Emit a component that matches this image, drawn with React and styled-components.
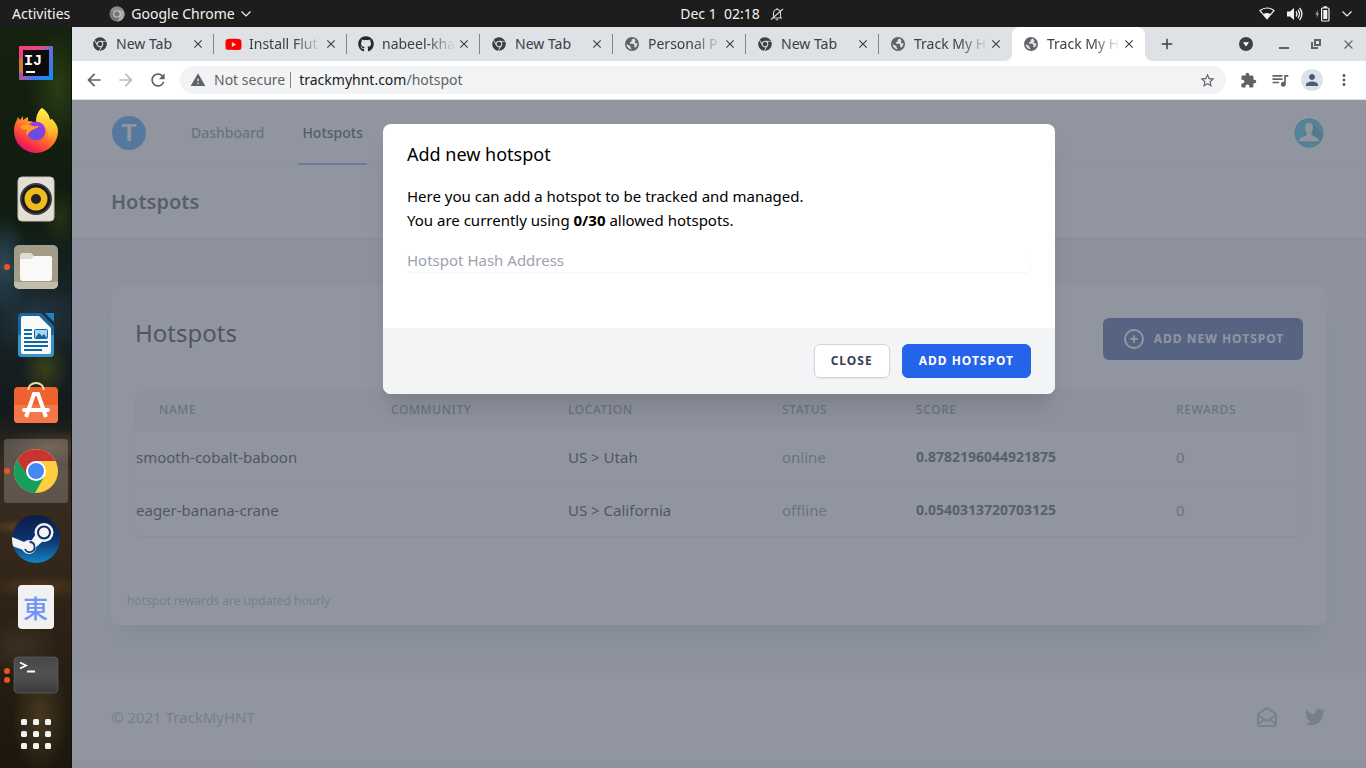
import React from "react";
import styled, { createGlobalStyle, css } from "styled-components";
import {
  MdArrowBack, MdArrowForward, MdRefresh, MdWarning, MdStarBorder, MdExtension,
  MdQueueMusic, MdPerson, MdMoreVert, MdClose, MdAdd,
} from "react-icons/md";
import { FaGithub, FaYoutube, FaTwitter, FaChrome } from "react-icons/fa";
import { HiOutlineMailOpen, HiOutlinePlusCircle } from "react-icons/hi";

const GlobalStyle = createGlobalStyle`
  *, *::before, *::after { box-sizing: border-box; }
  body {
    margin: 0;
    font-family: "Noto Sans", "Open Sans", "Noto Sans CJK JP", sans-serif;
    font-size: 15px;
    line-height: 24px;
    color: #000;
  }
  h1, h2, p { margin: 0; font-size: inherit; font-weight: 400; }
  a { color: inherit; text-decoration: none; }
  svg { display: block; flex: none; }
  button, input { font: inherit; color: inherit; margin: 0; padding: 0; border: 0; background: none; }
  button { display: flex; align-items: center; justify-content: center; }
`;

/* ---------- desktop shell ---------- */

const Desktop = styled.div`
  min-height: 100vh;
  display: flex;
  flex-direction: column;
`;

const TopBar = styled.header`
  display: grid;
  grid-template-columns: 1fr auto 1fr;
  align-items: center;
  height: 27px;
  padding: 0 14px 0 12px;
  background: #1d1d1d;
  color: #f2f2f2;
  font-size: 14px;
`;

const BarGroup = styled.div`
  display: flex;
  align-items: center;
  gap: ${(p) => p.$gap}px;
  justify-content: ${(p) => p.$align || "flex-start"};
`;

const Clock = styled(BarGroup)`
  margin-left: 100px;
`;

const BarButton = styled.button`
  gap: 6px;
  line-height: 27px;
`;

const Workspace = styled.div`
  flex: 1;
  display: flex;
`;

const Dock = styled.nav`
  width: 72px;
  flex: none;
  padding-top: 2px;
  display: flex;
  flex-direction: column;
  align-items: center;
  border-right: 1px solid #111;
  background:
    radial-gradient(30px 60px at 58px 60px, rgba(52, 72, 22, 0.7), transparent),
    radial-gradient(24px 30px at 45px 342px, rgba(84, 92, 18, 0.55), transparent),
    radial-gradient(26px 50px at 4px 238px, rgba(52, 82, 104, 0.8), transparent),
    radial-gradient(50px 40px at 36px 292px, rgba(40, 62, 76, 0.7), transparent),
    radial-gradient(20px 30px at 60px 190px, rgba(56, 70, 22, 0.5), transparent),
    radial-gradient(50px 18px at 50px 420px, rgba(110, 84, 58, 0.6), transparent),
    radial-gradient(40px 8px at 20px 500px, rgba(110, 78, 44, 0.6), transparent),
    radial-gradient(50px 12px at 40px 560px, rgba(108, 72, 36, 0.55), transparent),
    radial-gradient(40px 30px at 20px 620px, rgba(66, 54, 36, 0.7), transparent),
    radial-gradient(28px 60px at 40px 690px, rgba(92, 76, 44, 0.6), transparent),
    linear-gradient(#14220e, #101c10 25%, #18242a 38%, #141a1a 52%, #3a2c20 60%, #33261a 72%, #2a2014 84%, #1c160c);
`;

const DockItem = styled.button`
  position: relative;
  width: 64px;
  height: 64px;
  margin: 2px 0;
  border-radius: 3px;
  ${(p) => p.$active && css`background: rgba(255, 255, 255, 0.2);`}
`;

const RunningDots = styled.span`
  position: absolute;
  left: 0;
  top: 0;
  height: 100%;
  display: flex;
  flex-direction: column;
  justify-content: center;
  gap: 3px;

  i {
    width: 6px;
    height: 6px;
    border-radius: 50%;
    background: #e95420;
  }
`;

/* ---------- browser chrome ---------- */

const Browser = styled.div`
  flex: 1;
  min-width: 0;
  display: flex;
  flex-direction: column;
`;

const TabStrip = styled.div`
  display: flex;
  align-items: center;
  height: 34px;
  padding: 0 2px 0 9px;
  background: #dee1e6;
  color: #3c4043;
`;

const Tab = styled.div`
  position: relative;
  width: 133px;
  height: 34px;
  display: flex;
  align-items: center;
  padding: 0 9px 0 11px;
  font-size: 14px;

  &::after {
    content: "";
    position: absolute;
    right: 0;
    top: 7px;
    width: 1px;
    height: 20px;
    background: ${(p) => (p.$active || p.$last ? "transparent" : "#80868b")};
  }

  ${(p) => p.$active && css`
    background: #fff;
    border-radius: 8px 8px 0 0;

    &::before {
      content: "";
      position: absolute;
      bottom: 0;
      left: -8px;
      right: -8px;
      height: 8px;
      background:
        radial-gradient(circle at 0 0, transparent 8px, #fff 8px) left / 8px 8px no-repeat,
        radial-gradient(circle at 100% 0, transparent 8px, #fff 8px) right / 8px 8px no-repeat;
    }
  `}
`;

const TabIcon = styled.span`
  width: 16px;
  margin-right: 8px;
  display: grid;
  place-items: center;
`;

const TabTitle = styled.span`
  flex: 1;
  min-width: 0;
  white-space: nowrap;
  ${(p) => !p.$short && css`mask-image: linear-gradient(to right, #000 60%, transparent 98%);`}
`;

const NewTabButton = styled.button`
  width: 32px;
  height: 32px;
  margin-left: 6px;
`;

const WindowControls = styled.div`
  margin-left: auto;
  display: flex;

  button { width: 32px; height: 32px; }
  button:first-child { width: 44px; }
`;

const Toolbar = styled.div`
  display: flex;
  align-items: center;
  height: 39px;
  padding: 0 6px;
  background: #fff;
  border-bottom: 1px solid #dadce0;
  color: #5f6368;
`;

const ToolButton = styled.button`
  width: 32px;
  height: 32px;
  color: ${(p) => (p.$faded ? "#babcbe" : "#5f6368")};
`;

const Avatar = styled.span`
  width: 22px;
  height: 22px;
  display: grid;
  place-items: center;
  border-radius: 50%;
  background: #dee1e6;
  color: #4b5b78;
`;

const Omnibox = styled.div`
  flex: 1;
  height: 28px;
  margin: 0 6px;
  padding: 0 10px;
  display: flex;
  align-items: center;
  gap: 8px;
  border-radius: 14px;
  background: #f1f3f4;
  font-size: 14px;
`;

const Security = styled.span`
  padding-right: 5px;
  border-right: 1px solid #80868b;
  line-height: 16px;
`;

const Url = styled.span`
  flex: 1;
  b { font-weight: 400; color: #202124; }
`;

/* ---------- web page ---------- */

const Page = styled.div`
  position: relative;
  flex: 1;
  background: #f3f4f6;
`;

const Container = styled.div`
  max-width: 1280px;
  margin: 0 auto;
  padding: 0 32px;
`;

const NavBar = styled.div`
  background: #fff;
  box-shadow: inset 0 -1px #f3f4f6;
`;

const NavRow = styled(Container)`
  display: flex;
  height: 65px;
`;

const Brand = styled.a`
  align-self: center;
  display: grid;
  place-items: center;
  width: 36px;
  height: 34px;
  margin-right: 40px;
`;

const NavLink = styled.a`
  display: flex;
  align-items: center;
  margin-right: 30px;
  padding: 2px 4px 0;
  border-bottom: 2px solid ${(p) => (p.$active ? "#818cf8" : "transparent")};
  color: ${(p) => (p.$active ? "#111827" : "#6b7280")};
  font-size: 14px;
  font-weight: 500;
`;

const UserButton = styled.button`
  margin-left: auto;
  margin-right: 3px;
`;

const PageHeader = styled.header`
  background: #fff;
  box-shadow: 0 1px 3px rgba(0, 0, 0, 0.1), 0 1px 2px rgba(0, 0, 0, 0.06);

  h1 {
    padding: 24px 0;
    color: #1f2937;
    font-size: 20px;
    font-weight: 600;
    line-height: 25px;
  }
`;

const Main = styled(Container)`
  padding-top: 48px;
  padding-bottom: 48px;
`;

const Card = styled.section`
  padding: 32px 24px 12px;
  background: #fff;
  border-radius: 8px;
  box-shadow: 0 20px 25px -5px rgba(0, 0, 0, 0.1), 0 10px 10px -5px rgba(0, 0, 0, 0.04);
`;

const CardHead = styled.div`
  display: flex;
  justify-content: space-between;
  height: 42px;
  margin-bottom: 30px;

  h2 { font-size: 24px; line-height: 30px; }
`;

const capsText = css`
  font-size: 12px;
  font-weight: 700;
  letter-spacing: 1px;
  text-transform: uppercase;
  white-space: nowrap;
`;

const AddNewButton = styled.button`
  ${capsText}
  width: 200px;
  gap: 8px;
  border-radius: 6px;
  background: #1e3a8a;
  color: #fff;
`;

const TableFrame = styled.div`
  overflow: hidden;
  border-radius: 8px;
  box-shadow: 0 1px 3px rgba(0, 0, 0, 0.1), 0 1px 2px rgba(0, 0, 0, 0.06);
`;

const Table = styled.table`
  width: 100%;
  table-layout: fixed;
  border-collapse: collapse;
  text-align: left;

  th {
    height: 40px;
    padding: 0 24px;
    background: #f3f4f6;
    color: #6b7280;
    font-size: 12px;
    font-weight: 500;
    letter-spacing: 0.05em;
    text-transform: uppercase;
  }
  td {
    height: 53px;
    padding: 0 24px;
    border-top: 1px solid #e9ebee;
    white-space: nowrap;
  }
  td:first-child { padding: 0 1px; }
`;

const Muted = styled.td`
  color: #6b7280;
`;

const Score = styled.td`
  color: #1f2937;
  font-size: 14px;
  font-weight: 700;
`;

const Footnote = styled.p`
  margin: 53px -8px 0;
  color: #9ca3af;
  font-size: 12px;
`;

const Footer = styled.footer`
  background: #fff;
  color: #9ca3af;
`;

const FooterRow = styled(Container)`
  display: flex;
  align-items: center;
  gap: 24px;
  height: 88px;

  p { flex: 1; }
`;

const FooterLink = styled.a`
  display: grid;
  place-items: center;
  width: 24px;
  height: 24px;
`;

/* ---------- modal ---------- */

const Overlay = styled.div`
  position: absolute;
  inset: 0;
  padding-top: 24px;
  background: rgba(107, 114, 128, 0.75);
`;

const Modal = styled.div`
  max-width: 672px;
  margin: 0 auto;
  overflow: hidden;
  border-radius: 8px;
  background: #fff;
  box-shadow: 0 20px 25px -5px rgba(0, 0, 0, 0.1), 0 10px 10px -5px rgba(0, 0, 0, 0.04);
`;

const ModalBody = styled.div`
  padding: 16px 24px 56px;

  h2 { font-size: 18px; line-height: 28px; }
  p { margin: 16px 0; }
`;

const AddressInput = styled.input`
  display: block;
  width: 100%;
  height: 24px;
  border-radius: 6px;
  box-shadow: 0 1px 2px rgba(0, 0, 0, 0.05);

  &::placeholder { color: #9ca3af; opacity: 1; }
`;

const ModalFoot = styled.div`
  display: flex;
  justify-content: flex-end;
  gap: 12px;
  padding: 16px 24px;
  background: #f3f4f6;
`;

const ModalButton = styled.button`
  ${capsText}
  height: 34px;
  padding: 0 16px;
  border: 1px solid ${(p) => (p.$primary ? "#2563eb" : "#d1d5db")};
  border-radius: 6px;
  background: ${(p) => (p.$primary ? "#2563eb" : "#fff")};
  color: ${(p) => (p.$primary ? "#fff" : "#374151")};
  ${(p) => !p.$primary && css`box-shadow: 0 1px 2px rgba(0, 0, 0, 0.05);`}
`;

/* ---------- drawings ---------- */

const Chevron = () => (
  <svg width="10" height="6" viewBox="0 0 10 6" fill="none" stroke="currentColor" strokeWidth="1.2"><path d="M.5.5 5 5 9.5.5" /></svg>
);

const ChromeGray = () => (
  <svg width="16" height="16" viewBox="0 0 16 16">
    <circle cx="8" cy="8" r="7.5" fill="#777" />
    <path d="M8 4.2h6.5A7.5 7.5 0 0 1 8 15.5l3.3-5.6z" fill="#a9a9a9" />
    <path d="M1.5 4.3A7.5 7.5 0 0 1 14.5 4.2H8a3.8 3.8 0 0 0-3.6 2.6z" fill="#8d8d8d" />
    <circle cx="8" cy="8" r="3.6" fill="#ddd" /><circle cx="8" cy="8" r="2.7" fill="#777" />
  </svg>
);

const BellOff = () => (
  <svg width="14" height="14" viewBox="0 0 14 14" fill="none" stroke="#d5d5d5" strokeWidth="1.1">
    <path d="M2 11h10M3.5 11V6a3.5 3.5 0 0 1 7 0v5M5.8 12.8h2.4M7 1v1.5M1 12.5 13 2" />
  </svg>
);

const Wifi = () => (
  <svg width="16" height="13" viewBox="0 0 16 13">
    <path d="M1 3.6Q8-1.6 15 3.6L8 11.8Z" fill="none" stroke="#f2f2f2" strokeWidth="1.2" />
    <path d="M4.2 7.3Q8 4.8 11.8 7.3L8 12Z" fill="#f2f2f2" />
  </svg>
);

const Volume = () => (
  <svg width="16" height="14" viewBox="0 0 16 14" fill="none" stroke="#f2f2f2" strokeWidth="1.3">
    <path d="M0 4.5h3L7 1v12L3 9.5H0z" fill="#f2f2f2" stroke="none" />
    <path d="M9 4.5q1.8 2.5 0 5M11 2.8q3 4.2 0 8.4M12.6 1q4.6 6 0 12" />
  </svg>
);

const Battery = () => (
  <svg width="15" height="16" viewBox="0 0 15 16">
    <path d="M3 4 .3 8.5H2L1.4 12 4 7.5H2.6z" fill="#aaa" />
    <rect x="6.6" y="2" width="7.4" height="13" rx="1" fill="none" stroke="#f2f2f2" strokeWidth="1.2" />
    <path d="M8.5.2h3.6V2H8.5zM8.3 4h4v9h-4z" fill="#f2f2f2" />
  </svg>
);

const Globe = () => (
  <svg width="14" height="14" viewBox="0 0 14 14">
    <circle cx="7" cy="7" r="7" fill="#5f6368" />
    <path d="M8.200 1.600 6.600 3v1.600L4.800 5.400l.4 1.400h3.200l1.200 1.500-.6 1.600 1.800.6A5.400 5.400 0 0 0 12.400 6L11 6.500 9.800 5.600 10.600 3.800 9.400 2zM1.600 7.200 4 8.200l1.600 1.200v1.400l1.200 1.600A5.400 5.400 0 0 1 1.600 7.200z" fill="#dee1e6" />
  </svg>
);

const Idea = () => (
  <svg width="36" height="36" viewBox="0 0 36 36">
    <defs><linearGradient id="ij" x1="0" y1="0" x2="1" y2="1"><stop offset="0" stopColor="#fc3a72" /><stop offset=".35" stopColor="#e04a8c" /><stop offset=".5" stopColor="#6b6cd6" /><stop offset="1" stopColor="#0a8cfa" /></linearGradient></defs>
    <path d="M1 1h34v34H1z" fill="url(#ij)" />
    <path d="M1 14h4l2 12-6 9z" fill="#c87838" /><path d="M1 26l10 9H1z" fill="#a658a8" />
    <path d="M5 5h26v26H5z" fill="#0b0b0c" />
    <text x="6" y="20" fill="#fff" fontFamily="Liberation Mono" fontWeight="700" fontSize="15">IJ</text>
    <path d="M8 26h9v2H8z" fill="#fff" />
  </svg>
);

const Firefox = () => (
  <svg width="46" height="48" viewBox="0 0 46 48">
    <defs>
      <linearGradient id="fx" x1=".85" y1="0" x2=".25" y2="1"><stop offset="0" stopColor="#fff04a" /><stop offset=".3" stopColor="#ffbd28" /><stop offset=".6" stopColor="#ff6a28" /><stop offset=".85" stopColor="#f5264e" /><stop offset="1" stopColor="#d80f80" /></linearGradient>
      <radialGradient id="fp" cx=".5" cy=".7" r=".7"><stop offset="0" stopColor="#5b50e0" /><stop offset="1" stopColor="#a03ae8" /></radialGradient>
      <linearGradient id="fy" x1=".5" y1="0" x2=".5" y2="1"><stop offset="0" stopColor="#fff04a" /><stop offset="1" stopColor="#ffb02a" stopOpacity=".5" /></linearGradient>
    </defs>
    <path d="M29 1c4 3 7 6 8 12l2-1c4 4 6 8 6 12A22 22 0 0 1 1 24c0-6 2-9 2-9l2-5 2 3 3-4v4l5-3v4c4 0 6 1 8 3 0-6 1-12 6-16z" fill="url(#fx)" />
    <path d="M29 1c4 3 7 6 8 12l2-1c5 8 3 17-3 20 0-9-3-13-7-14-4-2-6-4-6-1 0-6 1-12 6-16z" fill="url(#fy)" />
    <circle cx="23" cy="24" r="9.500" fill="url(#fp)" />
    <path d="M7 20c3-3 8-3 13-1 3 1 5-1 6 0-2 3-6 3-8 5-2 1-3 3-4 5-1-3-1-4 0-6-3 0-5-1-7-3z" fill="#ff9a22" />
  </svg>
);

const Rhythmbox = () => (
  <svg width="38" height="46" viewBox="0 0 38 46">
    <rect x="1" y="1" width="36" height="44" rx="4" fill="#e4dfd4" stroke="#c9c3b6" />
    <circle cx="19" cy="23" r="16" fill="#3a3a42" /><circle cx="19" cy="23" r="14" fill="#17171c" />
    <circle cx="19" cy="23" r="11.500" fill="#f0bb1c" /><circle cx="19" cy="23" r="5" fill="#222" />
  </svg>
);

const Files = () => (
  <svg width="46" height="46" viewBox="0 0 46 46">
    <rect x="1" y="1" width="44" height="44" rx="5" fill="#a39c89" /><path d="M1 40a5 5 0 0 0 5 5h34a5 5 0 0 0 5-5v-2H1z" fill="#c2bcad" />
    <path d="M7 14v-3a2 2 0 0 1 2-2h9l4 4h15a2 2 0 0 1 2 2v4H7z" fill="#e0dbcf" />
    <path d="M7 15h11l3-3h16a2 2 0 0 1 2 2v20a3 3 0 0 1-3 3H10a3 3 0 0 1-3-3z" fill="#faf9f7" />
  </svg>
);

const Writer = () => (
  <svg width="38" height="46" viewBox="0 0 38 46">
    <path d="M4 1h20l13 13v27a4 4 0 0 1-4 4H5a4 4 0 0 1-4-4V5a4 4 0 0 1 3-4z" fill="#1767a0" />
    <path d="M1 23h36v18a4 4 0 0 1-4 4H5a4 4 0 0 1-4-4z" fill="#3795cc" />
    <path d="M6 4h16l12 12v24a2 2 0 0 1-2 2H6a2 2 0 0 1-2-2V6a2 2 0 0 1 2-2z" fill="#fafafa" />
    <path d="M28 1h9v9z" fill="#1e86c8" />
    <path d="M7 17h8v2H7zm0 4h8v2H7zm0 4h8v2H7zm0 4h24v2H7zm0 4h24v2H7zm0 4h18v2H7z" fill="#0f6aa8" />
    <rect x="17.5" y="17.500" width="13" height="9" rx="1" fill="#a9d4f2" stroke="#1767a0" /><path d="M18 26l4-5 3 3 2-2 3 4z" fill="#1767a0" />
  </svg>
);

const Software = () => (
  <svg width="46" height="42" viewBox="0 0 46 42">
    <rect x="1" y="5" width="44" height="36" rx="4" fill="#ee6230" /><path d="M1 23h44v14a4 4 0 0 1-4 4H5a4 4 0 0 1-4-4z" fill="#f4774a" />
    <path d="M15.500 8V7a7.500 6 0 0 1 15 0v1" fill="none" stroke="#f3dfa8" strokeWidth="2" />
    <path d="M13 35 21 12h4l8 23" fill="none" stroke="#fff" strokeWidth="4" /><path d="M11 28h24" stroke="#fff" strokeWidth="4" strokeLinecap="round" />
  </svg>
);

const ChromeColor = () => (
  <svg width="46" height="46" viewBox="0 0 46 46">
    <circle cx="23" cy="23" r="22" fill="#ffcd3f" />
    <path d="M4 12A22 22 0 0 1 42.500 13H23l-9 15z" fill="#ca3430" />
    <path d="M4 12a22 22 0 0 0 18 33l9-16-16-1z" fill="#17a05d" />
    <circle cx="23" cy="23" r="10" fill="#fff" /><circle cx="23" cy="23" r="8" fill="#4487f6" />
  </svg>
);

const Steam = () => (
  <svg width="48" height="48" viewBox="0 0 48 48">
    <defs>
      <linearGradient id="st" x1="0" y1="0" x2="0" y2="1"><stop offset="0" stopColor="#0c1c48" /><stop offset=".5" stopColor="#0d3270" /><stop offset="1" stopColor="#1284c0" /></linearGradient>
      <clipPath id="sc"><circle cx="24" cy="24" r="24" /></clipPath>
    </defs>
    <circle cx="24" cy="24" r="24" fill="url(#st)" />
    <g clipPath="url(#sc)">
      <path d="M0 22 17 29 24 19 31 26 22 34 17 37 0 31Z" fill="#f4f4f4" />
      <circle cx="32" cy="17.500" r="9.500" fill="#f4f4f4" /><circle cx="17" cy="32" r="7" fill="#f4f4f4" />
      <circle cx="32" cy="17.500" r="6" fill="#f4f4f4" stroke="#0d2a60" strokeWidth="2" />
      <path d="M13 34a5 5 0 1 0 4.500-7" fill="none" stroke="#0d3a78" strokeWidth="1.800" />
    </g>
  </svg>
);

const Kanji = styled.span`
  width: 36px;
  height: 44px;
  display: grid;
  place-items: center;
  border-radius: 4px;
  background: #f1f1f1;
  color: #7094f5;
  font-family: "Noto Sans CJK JP", sans-serif;
  font-size: 25px;
  font-weight: 500;
`;

const Terminal = () => (
  <svg width="46" height="38" viewBox="0 0 46 38">
    <defs><linearGradient id="tm" x1="0" y1="0" x2="0" y2="1"><stop offset="0" stopColor="#484848" /><stop offset=".5" stopColor="#505050" /><stop offset="1" stopColor="#3a3a3a" /></linearGradient></defs>
    <rect x="1" y="1" width="44" height="36" rx="4" fill="url(#tm)" stroke="#6a6a6a" strokeWidth=".6" />
    <path d="M7 6.500l6 3-6 3M14 15.500h8" fill="none" stroke="#fff" strokeWidth="1.800" />
  </svg>
);

const AppsGrid = () => (
  <svg width="30" height="30" viewBox="0 0 30 30" fill="#f2f2f2">
    {[0, 12, 24].map((y) => [0, 12, 24].map((x) => <rect key={`${x}-${y}`} x={x} y={y} width="6" height="6" rx="1.500" />))}
  </svg>
);

const AppsButton = styled.button`
  width: 64px;
  height: 50px;
`;

const SearchTabs = () => (
  <svg width="14" height="14" viewBox="0 0 14 14"><circle cx="7" cy="7" r="7" fill="#3c4043" /><path d="M4 5.200h6L7 9.500z" fill="#fff" /></svg>
);
const Minimise = () => (
  <svg width="10" height="10" viewBox="0 0 10 10"><path d="M0 8h10v2H0z" fill="#5f6368" /></svg>
);
const Restore = () => (
  <svg width="10" height="10" viewBox="0 0 10 10" fill="none" stroke="#5f6368" strokeWidth="2"><path d="M4 1h5v5H4zM1 3v6h6" /></svg>
);

const Logo = styled.span`
  width: 34px;
  height: 34px;
  display: grid;
  place-items: center;
  border-radius: 50%;
  background: #188cf0;
  color: #fff;
  font-family: "Liberation Sans", sans-serif;
  font-size: 24px;
  font-weight: 700;
`;

const UserPicture = () => (
  <svg width="30" height="30" viewBox="0 0 30 30">
    <circle cx="15" cy="15" r="14.500" fill="#10b6e6" />
    <path d="M18 5l10 10a14.500 14.500 0 0 1-4 10H6z" fill="#128fb0" />
    <circle cx="15" cy="15" r="14" fill="none" stroke="#18a0c0" />
    <path d="M11 9a4 4 0 0 1 8 0c0 3-1 4-1.500 6v2l6 3q1.500 1 1.500 3.500H5Q5 21 6.500 20l6-3v-2C12 13 11 12 11 9z" fill="#fff" />
  </svg>
);

/* ---------- data ---------- */

const tabs = [
  { title: "New Tab", icon: <FaChrome size={14} />, short: true },
  { title: "Install Flut", icon: <FaYoutube size={17} color="#f00" /> },
  { title: "nabeel-kha", icon: <FaGithub size={16} color="#24292e" /> },
  { title: "New Tab", icon: <FaChrome size={14} />, short: true },
  { title: "Personal P", icon: <Globe /> },
  { title: "New Tab", icon: <FaChrome size={14} />, short: true },
  { title: "Track My H", icon: <Globe /> },
  { title: "Track My H", icon: <Globe />, active: true },
];

const dockApps = [
  { name: "IntelliJ IDEA", art: <Idea /> },
  { name: "Firefox", art: <Firefox /> },
  { name: "Rhythmbox", art: <Rhythmbox /> },
  { name: "Files", art: <Files />, windows: 1 },
  { name: "LibreOffice Writer", art: <Writer /> },
  { name: "Ubuntu Software", art: <Software /> },
  { name: "Google Chrome", art: <ChromeColor />, windows: 1, active: true },
  { name: "Steam", art: <Steam /> },
  { name: "Dictionary", art: <Kanji>東</Kanji> },
  { name: "Terminal", art: <Terminal />, windows: 2 },
];

const columns = [
  ["Name", 232], ["Community", 177], ["Location", 214], ["Status", 134], ["Score", 260], ["Rewards", 151],
];

const hotspots = [
  { name: "smooth-cobalt-baboon", location: "US > Utah", status: "online", score: "0.8782196044921875", rewards: 0 },
  { name: "eager-banana-crane", location: "US > California", status: "offline", score: "0.0540313720703125", rewards: 0 },
];

function HotspotTable() {
  return (
    <TableFrame>
      <Table>
        <colgroup>{columns.map(([name, width]) => <col key={name} width={width} />)}</colgroup>
        <thead><tr>{columns.map(([name]) => <th key={name} scope="col">{name}</th>)}</tr></thead>
        <tbody>
          {hotspots.map((h) => (
            <tr key={h.name}>
              <td>{h.name}</td>
              <td />
              <td>{h.location}</td>
              <Muted>{h.status}</Muted>
              <Score>{h.score}</Score>
              <Muted>{h.rewards}</Muted>
            </tr>
          ))}
        </tbody>
      </Table>
    </TableFrame>
  );
}

function AddHotspotModal() {
  return (
    <Overlay>
      <Modal role="dialog" aria-labelledby="modal-title">
        <ModalBody>
          <h2 id="modal-title">Add new hotspot</h2>
          <p>
            Here you can add a hotspot to be tracked and managed.<br />
            You are currently using <b>0/30</b> allowed hotspots.
          </p>
          <AddressInput type="text" aria-label="Hotspot Hash Address" placeholder="Hotspot Hash Address" />
        </ModalBody>
        <ModalFoot>
          <ModalButton type="button">Close</ModalButton>
          <ModalButton type="button" $primary>Add Hotspot</ModalButton>
        </ModalFoot>
      </Modal>
    </Overlay>
  );
}

export default function App() {
  return (
    <Desktop>
      <GlobalStyle />
      <TopBar>
        <BarGroup $gap={39}>
          <BarButton>Activities</BarButton>
          <BarButton><ChromeGray />Google Chrome<Chevron /></BarButton>
        </BarGroup>
        <Clock $gap={10}><BarButton>Dec 1&nbsp; 02:18</BarButton><BellOff /></Clock>
        <BarGroup $gap={12} $align="flex-end"><Wifi /><Volume /><Battery /><Chevron /></BarGroup>
      </TopBar>
      <Workspace>
        <Dock aria-label="Dock">
          {dockApps.map((app) => (
            <DockItem key={app.name} type="button" aria-label={app.name} $active={app.active}>
              {app.windows && <RunningDots>{Array.from({ length: app.windows }, (_, i) => <i key={i} />)}</RunningDots>}
              {app.art}
            </DockItem>
          ))}
          <AppsButton type="button" aria-label="Show applications"><AppsGrid /></AppsButton>
        </Dock>
        <Browser>
          <TabStrip>
            {tabs.map((tab, i) => (
              <Tab key={i} $active={tab.active} $last={i === tabs.length - 2}>
                <TabIcon>{tab.icon}</TabIcon>
                <TabTitle $short={tab.short}>{tab.title}</TabTitle>
                <button type="button" aria-label="Close tab"><MdClose size={14} /></button>
              </Tab>
            ))}
            <NewTabButton type="button" aria-label="New tab"><MdAdd size={18} /></NewTabButton>
            <WindowControls>
              <button type="button" aria-label="Search tabs"><SearchTabs /></button>
              <button type="button" aria-label="Minimise"><Minimise /></button>
              <button type="button" aria-label="Restore"><Restore /></button>
              <button type="button" aria-label="Close"><MdClose size={15} color="#5f6368" /></button>
            </WindowControls>
          </TabStrip>
          <Toolbar>
            <ToolButton type="button" aria-label="Back"><MdArrowBack size={20} /></ToolButton>
            <ToolButton type="button" aria-label="Forward" $faded><MdArrowForward size={20} /></ToolButton>
            <ToolButton type="button" aria-label="Reload"><MdRefresh size={20} /></ToolButton>
            <Omnibox>
              <MdWarning size={16} />
              <Security>Not secure</Security>
              <Url><b>trackmyhnt.com</b>/hotspot</Url>
              <MdStarBorder size={17} />
            </Omnibox>
            <ToolButton type="button" aria-label="Extensions"><MdExtension size={17} /></ToolButton>
            <ToolButton type="button" aria-label="Media"><MdQueueMusic size={20} /></ToolButton>
            <ToolButton type="button" aria-label="Profile"><Avatar><MdPerson size={18} /></Avatar></ToolButton>
            <ToolButton type="button" aria-label="Menu"><MdMoreVert size={18} /></ToolButton>
          </Toolbar>
          <Page>
            <NavBar>
              <NavRow as="nav">
                <Brand href="#"><Logo>T</Logo></Brand>
                <NavLink href="#">Dashboard</NavLink>
                <NavLink href="#" $active>Hotspots</NavLink>
                <UserButton type="button" aria-label="Account"><UserPicture /></UserButton>
              </NavRow>
            </NavBar>
            <PageHeader><Container><h1>Hotspots</h1></Container></PageHeader>
            <Main as="main">
              <Card>
                <CardHead>
                  <h2>Hotspots</h2>
                  <AddNewButton type="button"><HiOutlinePlusCircle size={24} />Add new hotspot</AddNewButton>
                </CardHead>
                <HotspotTable />
                <Footnote>hotspot rewards are updated hourly</Footnote>
              </Card>
            </Main>
            <Footer>
              <FooterRow>
                <p>© 2021 TrackMyHNT</p>
                <FooterLink href="#mail" aria-label="Email"><HiOutlineMailOpen size={24} /></FooterLink>
                <FooterLink href="#twitter" aria-label="Twitter"><FaTwitter size={20} /></FooterLink>
              </FooterRow>
            </Footer>
            <AddHotspotModal />
          </Page>
        </Browser>
      </Workspace>
    </Desktop>
  );
}
